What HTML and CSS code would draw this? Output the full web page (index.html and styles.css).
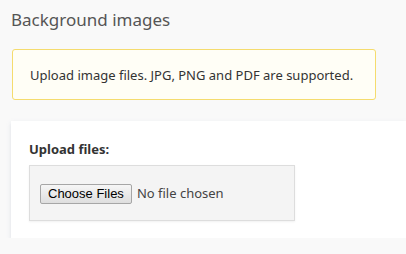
FILE: index.html
```html
<!DOCTYPE html>
<html lang="en">
<head>
    <meta charset="UTF-8">
    <title>Background images</title>
    <link rel="stylesheet" href="styles.css">
</head>
<body>

<h1 class="page-title">Background images</h1>

<div class="alert">Upload image files. JPG, PNG and PDF are supported.</div>

<div class="card">
    <label class="field-label" for="files">Upload files:</label>
    <div class="drop">
        <input type="file" id="files" multiple>
    </div>
</div>

</body>
</html>
```
FILE: styles.css
```css
body {
    background: #f9f9f9;
    color: #333;
    font-family: 'Noto Sans', sans-serif;
    margin: 0;
    padding: 0 0 0 11px;
    overflow: hidden;
}
.page-title {
    font-size: 17px;
    font-weight: 400;
    color: #555;
    margin: 0;
    padding: 7px 0 0 0;
    line-height: 25px;
}
.alert {
    width: 328px;
    margin: 17px 0 0 1px;
    padding: 16px 17px 15px;
    background: #fffef6;
    border: 1px solid #f5dc6e;
    border-radius: 3px;
    font-size: 13px;
    line-height: 18px;
    color: #333;
    white-space: nowrap;
}
.card {
    width: 359px;
    margin-top: 21px;
    padding: 19px 18px 17px;
    background: #fff;
    box-shadow: 0 2px 4px rgba(170, 180, 200, 0.35);
}
.field-label {
    display: block;
    font-size: 13px;
    font-weight: 700;
    color: #333;
    line-height: 18px;
    margin-bottom: 7px;
}
.drop {
    width: 244px;
    padding: 15px 10px 16px;
    background: #f4f4f4;
    border: 1px solid #ddd;
    box-shadow: 0 1px 2px rgba(0, 0, 0, 0.06);
}
input[type=file] {
    font-family: 'Noto Sans', sans-serif;
    font-size: 13px;
    color: #444;
    line-height: 20px;
}
input[type=file]::file-selector-button {
    font-family: 'Liberation Sans', Arial, sans-serif;
    font-size: 13px;
    color: #000;
    height: 20px;
    padding: 0 7px;
    margin-right: 5px;
    border: 1px solid #a6a6a6;
    border-radius: 2px;
    background: linear-gradient(#f6f6f6, #dedede);
}
```
